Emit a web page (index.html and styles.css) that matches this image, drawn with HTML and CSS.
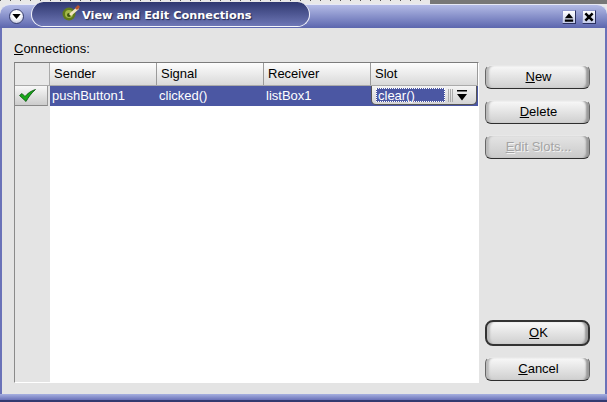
FILE: index.html
```html
<!DOCTYPE html>
<html lang="en">
<head>
    <meta charset="UTF-8">
    <title>View and Edit Connections</title>
    <link rel="stylesheet" href="styles.css">
</head>
<body>
    <div class="backdrop">
        <div class="backdrop-ticks"></div>
        <div class="backdrop-photo"></div>
    </div>
    <div class="window">
        <div class="titlebar">
            <div class="menu-btn">
                <svg width="9" height="5" viewBox="0 0 10 6"><path d="M0 0h10L5 6z" fill="#000"/></svg>
            </div>
            <div class="title-pill">
                <svg class="app-icon" width="18" height="16" viewBox="0 0 18 16">
                    <circle cx="7" cy="9" r="6.500" fill="#5f7a1c"/>
                    <circle cx="7" cy="9" r="4" fill="#a3b84a"/>
                    <circle cx="7" cy="10" r="2" fill="#3f5410"/>
                    <path d="M7 9l8-7 2 2-8 7z" fill="#f3e6c4"/>
                    <path d="M13 3l3-3 2 2-3 3z" fill="#b9542a"/>
                </svg>
                <span>View and Edit Connections</span>
            </div>
            <div class="title-buttons">
                <div class="win-btn">
                    <svg width="10" height="9" viewBox="0 0 12 10"><path d="M6 0l5 6H1z M1 7.500h10V10H1z" fill="#000"/></svg>
                </div>
                <div class="win-btn">
                    <svg width="10" height="10" viewBox="0 0 11 11"><path d="M1.500 1.500l8 8M9.500 1.500l-8 8" stroke="#000" stroke-width="2.800"/></svg>
                </div>
            </div>
        </div>
        <div class="content">
            <div class="main">
                <div class="label"><u>C</u>onnections:</div>
                <div class="table">
                    <div class="row-header">
                        <div class="corner"></div>
                        <div class="row-mark">
                            <svg width="17" height="13" viewBox="0 0 17 13"><path d="M.5 6.500L3 4.500l3 3C8.500 4.500 12 1.800 16.500.5 12.500 4 9.500 8 7 12.500z" fill="#18a818" stroke="#07520c" stroke-width=".8"/></svg>
                        </div>
                    </div>
                    <div class="table-body">
                        <div class="head-row">
                            <div class="head-cell">Sender</div>
                            <div class="head-cell">Signal</div>
                            <div class="head-cell">Receiver</div>
                            <div class="head-cell">Slot</div>
                        </div>
                        <div class="data-row">
                            <div class="cell">pushButton1</div>
                            <div class="cell">clicked()</div>
                            <div class="cell">listBox1</div>
                            <div class="cell cell-combo">
                                <div class="combo">
                                    <span class="combo-text">clear()</span>
                                    <span class="combo-grip"></span>
                                    <svg width="10" height="11" viewBox="0 0 10 11"><path d="M0 0h10v1.500H0z M0 4h10L5 10.500z" fill="#000"/></svg>
                                </div>
                            </div>
                        </div>
                    </div>
                </div>
            </div>
            <div class="side">
                <button class="btn"><u>N</u>ew</button>
                <button class="btn"><u>D</u>elete</button>
                <button class="btn btn-disabled"><u>E</u>dit Slots...</button>
                <div class="side-gap"></div>
                <button class="btn btn-default"><u>O</u>K</button>
                <button class="btn"><u>C</u>ancel</button>
            </div>
        </div>
        <div class="bottom-bar"></div>
    </div>
</body>
</html>
```
FILE: styles.css
```css
html, body {
    margin: 0;
    padding: 0;
}

body {
    width: 607px;
    height: 402px;
    overflow: hidden;
    background: #e8e8e8;
    font-family: "Liberation Sans", Arial, sans-serif;
    font-size: 13px;
    color: #000;
}

.backdrop {
    display: flex;
    height: 4px;
}

.backdrop-ticks {
    width: 430px;
    height: 4px;
    background: repeating-linear-gradient(90deg, #555 0, #555 1px, #e8e8e8 1px, #e8e8e8 10px) top / 100% 1px no-repeat;
}

.backdrop-photo {
    flex: 1;
    background: #777;
}

.window {
    height: 398px;
    display: flex;
    flex-direction: column;
}

.titlebar {
    height: 24px;
    display: flex;
    align-items: flex-start;
    background: linear-gradient(#b3bbe6, #5c66ae);
    border-top: 1px solid #e6e8f6;
    box-sizing: border-box;
    border-radius: 10px 10px 0 0;
    flex: none;
}

.menu-btn {
    width: 15px;
    height: 15px;
    margin: 4px 0 0 9px;
    border-radius: 50%;
    background: radial-gradient(circle at 50% 35%, #fff 40%, #aab0d0);
    border: 1px solid #39406f;
    box-sizing: border-box;
    display: flex;
    align-items: center;
    justify-content: center;
}

.title-pill {
    width: 279px;
    height: 25px;
    margin: -3px 0 0 7px;
    box-sizing: border-box;
    border: 1px solid #f4f5fb;
    border-top: 0;
    border-radius: 13px;
    background: linear-gradient(#2f3870, #6e77b6);
    color: #fff;
    font-family: "DejaVu Sans", sans-serif;
    font-weight: bold;
    font-size: 11.3px;
    display: flex;
    align-items: center;
    padding: 2px 0 0 30px;
    gap: 2px;
    text-shadow: 1px 1px 1px #1f2550;
}

.app-icon {
    flex: none;
    margin-top: -4px;
}

.title-buttons {
    margin-left: auto;
    display: flex;
    gap: 6px;
    padding: 5px 11px 0 0;
}

.win-btn {
    width: 14px;
    height: 14px;
    box-sizing: border-box;
    background: linear-gradient(#fff, #c4cbea);
    border: 1px solid #8f97cc;
    border-right-color: #2b3160;
    border-bottom-color: #2b3160;
    display: flex;
    align-items: center;
    justify-content: center;
}

.content {
    flex: 1;
    display: flex;
    background: #e4e4e4;
    border-left: 2px solid #6a72b8;
    border-right: 2px solid #6a72b8;
    padding: 0 13px 11px 12px;
    min-height: 0;
}

.main {
    width: 465px;
    display: flex;
    flex-direction: column;
}

.label {
    height: 34px;
    line-height: 42px;
    flex: none;
}

.table {
    flex: 1;
    display: flex;
    border-top: 1px solid #7c7c7c;
    border-left: 1px solid #8a8a8a;
    border-bottom: 1px solid #fff;
    border-right: 1px solid #fff;
}

.row-header {
    width: 35px;
    flex: none;
    background: #e4e4e4;
}

.corner {
    height: 23px;
    box-sizing: border-box;
    border-bottom: 1px solid #aaa;
    border-right: 1px solid #aaa;
    background: #e8e8e8;
}

.row-mark {
    height: 20px;
    width: 33px;
    box-sizing: border-box;
    padding-left: 4px;
    background: linear-gradient(#f8f8f8, #cccccc);
    border-bottom: 1px solid #888;
    border-right: 1px solid #999;
    display: flex;
    align-items: center;
}

.table-body {
    flex: 1;
    background: #fff;
}

.head-row {
    height: 23px;
    display: grid;
    grid-template-columns: repeat(4, 107px);
    background: linear-gradient(#fdfdfd, #d9d9d9);
    border-bottom: 1px solid #aaa;
    box-sizing: border-box;
}

.head-cell {
    padding-left: 4px;
    line-height: 22px;
    border-right: 1px solid #9a9a9a;
}

.data-row {
    height: 20px;
    display: grid;
    grid-template-columns: repeat(4, 107px);
    background: #4b57a3;
    color: #fff;
}

.cell {
    padding-left: 2px;
    line-height: 19px;
}

.cell-combo {
    padding: 0;
}

.combo {
    height: 19px;
    box-sizing: border-box;
    margin-right: 1px;
    padding: 0 6px 0 4px;
    display: flex;
    align-items: center;
    border: 1px solid #555;
    border-top: 0;
    border-radius: 0 0 5px 5px;
    background: linear-gradient(#f4f4f4, #d4d4d4);
}

.combo-text {
    width: 69px;
    height: 14px;
    line-height: 13px;
    box-sizing: border-box;
    padding-left: 1px;
    background: #4b57a3;
    border: 1px dotted #fff;
    color: #fff;
}

.combo-grip {
    width: 5px;
    height: 13px;
    margin: 0 4px 0 3px;
    background: repeating-linear-gradient(90deg, #aaa 0, #aaa 1px, transparent 1px, transparent 2px);
}

.side {
    flex: 1;
    display: flex;
    flex-direction: column;
    padding: 37px 0 2px 6px;
    gap: 11px;
}

.btn {
    width: 105px;
    height: 24px;
    flex: none;
    font-family: inherit;
    font-size: 13px;
    color: #000;
    padding: 0 0 2px 2px;
    border: 1px solid #666;
    border-bottom-color: #2e2e2e;
    border-top-color: #e8e8e8;
    border-radius: 6px;
    background: linear-gradient(#f8f8f8, #cfcfcf);
    box-shadow: inset 4px 0 2px -1px #bbb, inset -4px 0 2px -1px #999;
}

.btn-disabled {
    color: #a4a4a4;
    text-shadow: 1px 1px 0 #f4f4f4;
    background: linear-gradient(#e4e4e4, #cacaca);
    box-shadow: inset 4px 0 2px -1px #bbb, inset -4px 0 2px -1px #999;
}

.side-gap {
    flex: 1;
}

.btn-default {
    height: 26px;
    border: 2px solid #333;
    border-radius: 8px;
}

.bottom-bar {
    height: 8px;
    flex: none;
    background: linear-gradient(#a7b0e0 0, #6a72b8 75%, #333a70 75%, #333a70);
}
```
